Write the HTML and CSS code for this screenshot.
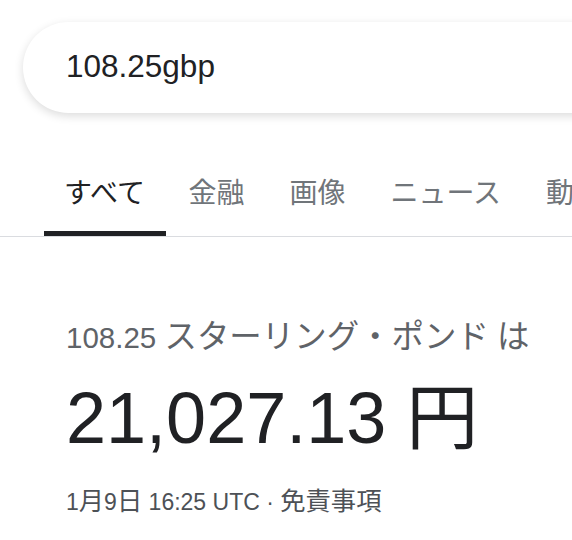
FILE: index.html
```html
<!DOCTYPE html>
<html>
<head>
    <meta charset="UTF-8">
    <title>108.25gbp - 検索</title>
    <link rel="stylesheet" href="styles.css">
</head>
<body>
<div class="search-wrap">
    <div class="search-box">
        <input type="text" class="search-input" value="108.25gbp">
    </div>
</div>

<div class="tabs">
    <div class="tab active">すべて</div>
    <div class="tab">金融</div>
    <div class="tab">画像</div>
    <div class="tab">ニュース</div>
    <div class="tab">動画</div>
</div>

<div class="result">
    <div class="result-from">108.25 <span class="ja">スターリング・ポンド</span> <span class="ja">は</span></div>
    <div class="result-to">21,027.13 円</div>
    <div class="result-meta">1<span class="ja">月</span>9<span class="ja">日</span> 16:25 UTC · <span class="ja">免責事項</span></div>
</div>
</body>
</html>
```

FILE: styles.css
```css
body {
    margin: 0;
    background-color: #fff;
    font-family: "Liberation Sans", Arial, "Noto Sans CJK JP", sans-serif;
    overflow: hidden;
}
.ja {
    font-size: 1.1em;
}
.search-wrap {
    padding: 22px 0 0 23px;
}
.search-box {
    height: 91px;
    width: 600px;
    border-radius: 46px;
    background-color: #fff;
    box-shadow: 0 3px 10px rgba(0,0,0,0.14);
    display: flex;
    align-items: center;
}
.search-input {
    border: none;
    outline: none;
    background: transparent;
    font-family: "Liberation Sans", Arial, sans-serif;
    font-size: 31.5px;
    color: #202124;
    padding: 0 0 0 43px;
    margin-top: -2px;
    width: 400px;
}
.tabs {
    display: flex;
    margin-top: 61px;
    padding-left: 44px;
    border-bottom: 1px solid #dadce0;
    white-space: nowrap;
}
.tab {
    flex: none;
    padding: 0 22.5px 17px;
    font-size: 28px;
    line-height: 40px;
    color: #70757a;
    border-bottom: 5px solid transparent;
}
.tab.active {
    padding-left: 20px;
    padding-right: 21px;
    color: #202124;
    border-bottom-color: #202124;
}
.result {
    padding: 82px 0 0 66px;
}
.result-from {
    font-size: 29.5px;
    line-height: 36px;
    color: #5f6368;
}
.result-to {
    font-size: 72px;
    line-height: 84px;
    color: #202124;
    margin-top: 20px;
}
.result-meta {
    font-size: 23px;
    line-height: 28px;
    color: #4d5156;
    margin-top: 27px;
}
```
